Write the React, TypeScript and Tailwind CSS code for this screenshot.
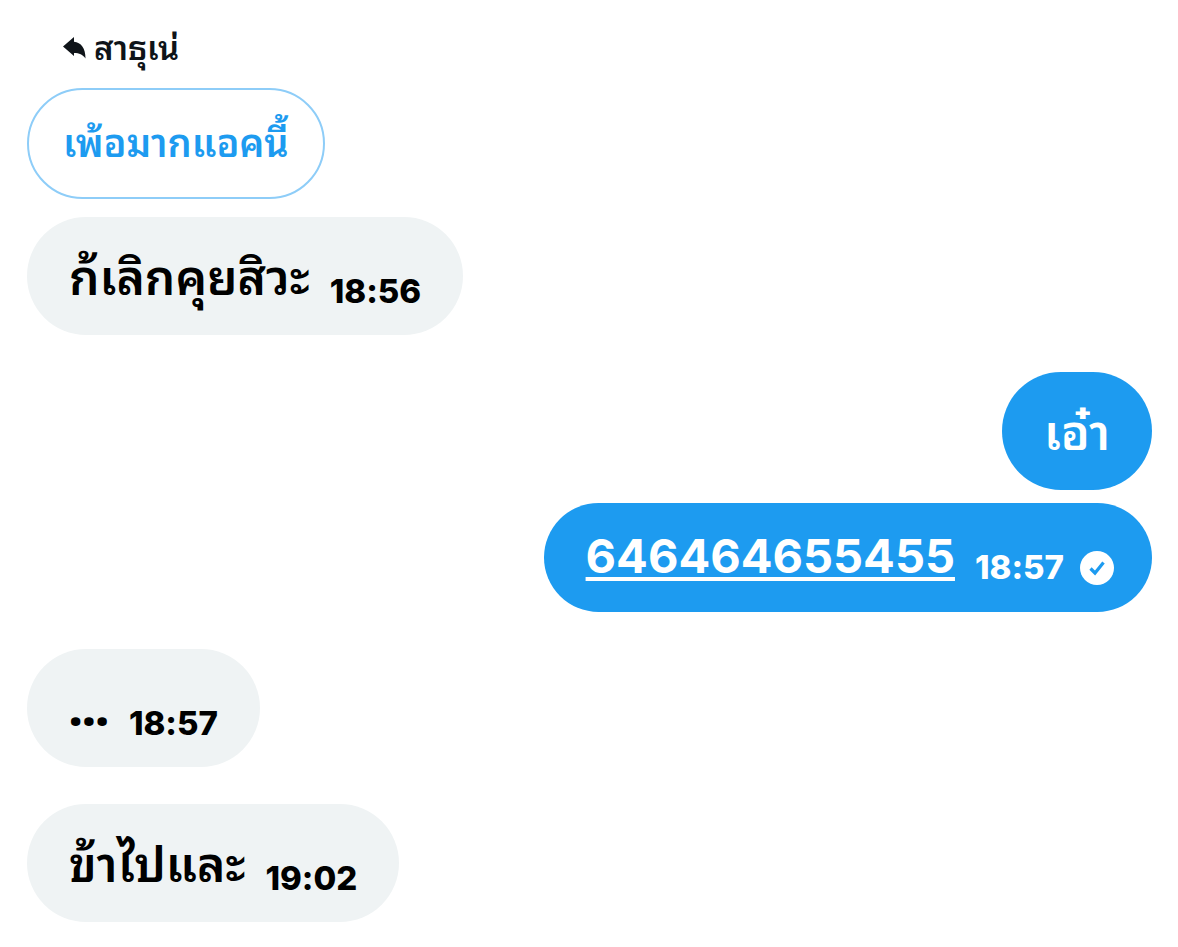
import { clsx } from "clsx";

interface BubbleProps {
  text: string;
  time?: string;
  mine?: boolean;
  link?: boolean;
  dots?: boolean;
  className?: string;
}

function ReplyIcon() {
  return (
    <svg viewBox="0 0 24 22" className="h-[22px] w-6 shrink-0" fill="currentColor" aria-hidden="true">
      <path d="M0 9.500 11 0v4.800C18 5.500 22.500 11 22.500 21.500c-3-4-6-5.500-11.500-5.500V19Z" />
    </svg>
  );
}

function SentIcon() {
  return (
    <svg viewBox="0 0 34 34" className="ml-4 mt-5 size-[34px] shrink-0" role="img" aria-label="Sent">
      <circle cx="17" cy="17" r="17" fill="white" />
      <path d="m10.500 17.500 4.500 4.500 8.500-10.500" fill="none" stroke="#1d9bf0" strokeWidth="3.200" />
    </svg>
  );
}

function Bubble({ text, time, mine, link, dots, className }: BubbleProps) {
  return (
    <div
      className={clsx(
        "flex w-fit items-center whitespace-nowrap rounded-[60px] pl-[42px]",
        mine ? "self-end bg-[#1d9bf0] text-white" : "bg-[#eff3f4] text-black",
        link ? "pr-[38px]" : "pr-[42px]",
        className
      )}
    >
      {link ? (
        <a
          href="tel:646464655455"
          className="pb-1 text-[47px] leading-[48px] font-bold underline decoration-4 underline-offset-4"
        >
          {text}
        </a>
      ) : (
        <p
          className={clsx(
            dots
              ? "font-['Open_Sans',sans-serif] text-[46px] leading-[48px] font-extrabold"
              : "pt-1 text-5xl font-semibold"
          )}
        >
          {text}
        </p>
      )}
      {time && <time className={clsx("ml-5 text-[33px] font-extrabold", link ? "pt-5" : "pt-8")}>{time}</time>}
      {link && <SentIcon />}
    </div>
  );
}

export default function App() {
  return (
    <main className="flex min-h-screen flex-col items-start bg-white pr-[26px] pl-[27px] pt-[30px] font-['Inter','Noto_Sans_Thai_Looped','Noto_Looped_Thai','Loma','Garuda','Waree','Umpush','Sarabun','Noto_Sans_Thai','Noto_Sans',sans-serif] [font-feature-settings:'calt'_0]">
      {/* Quoted message */}
      <div className="ml-9 flex h-[58px] gap-[7px] text-[33px] leading-9 font-semibold text-[#0f1419]">
        <div className="pt-[7px]">
          <ReplyIcon />
        </div>
        <span>สาธุเน่</span>
      </div>
      <div className="flex h-[111px] items-center rounded-[56px] border-2 border-[#8ecdf8] px-[34px] text-[38px] font-semibold text-[#1d9bf0]">
        เพ้อมากแอคนี้
      </div>

      <Bubble text="ก้เลิกคุยสิวะ" time="18:56" className="mt-[18px] h-[118px]" />
      <Bubble text="เอ๋า" mine className="mt-[37px] h-[118px]" />
      <Bubble text="646464655455" time="18:57" mine link className="mt-[13px] h-[109px]" />
      <Bubble text="..." time="18:57" dots className="mt-[37px] h-[118px]" />
      <Bubble text="ข้าไปและ" time="19:02" className="mt-[37px] h-[118px]" />
    </main>
  );
}
